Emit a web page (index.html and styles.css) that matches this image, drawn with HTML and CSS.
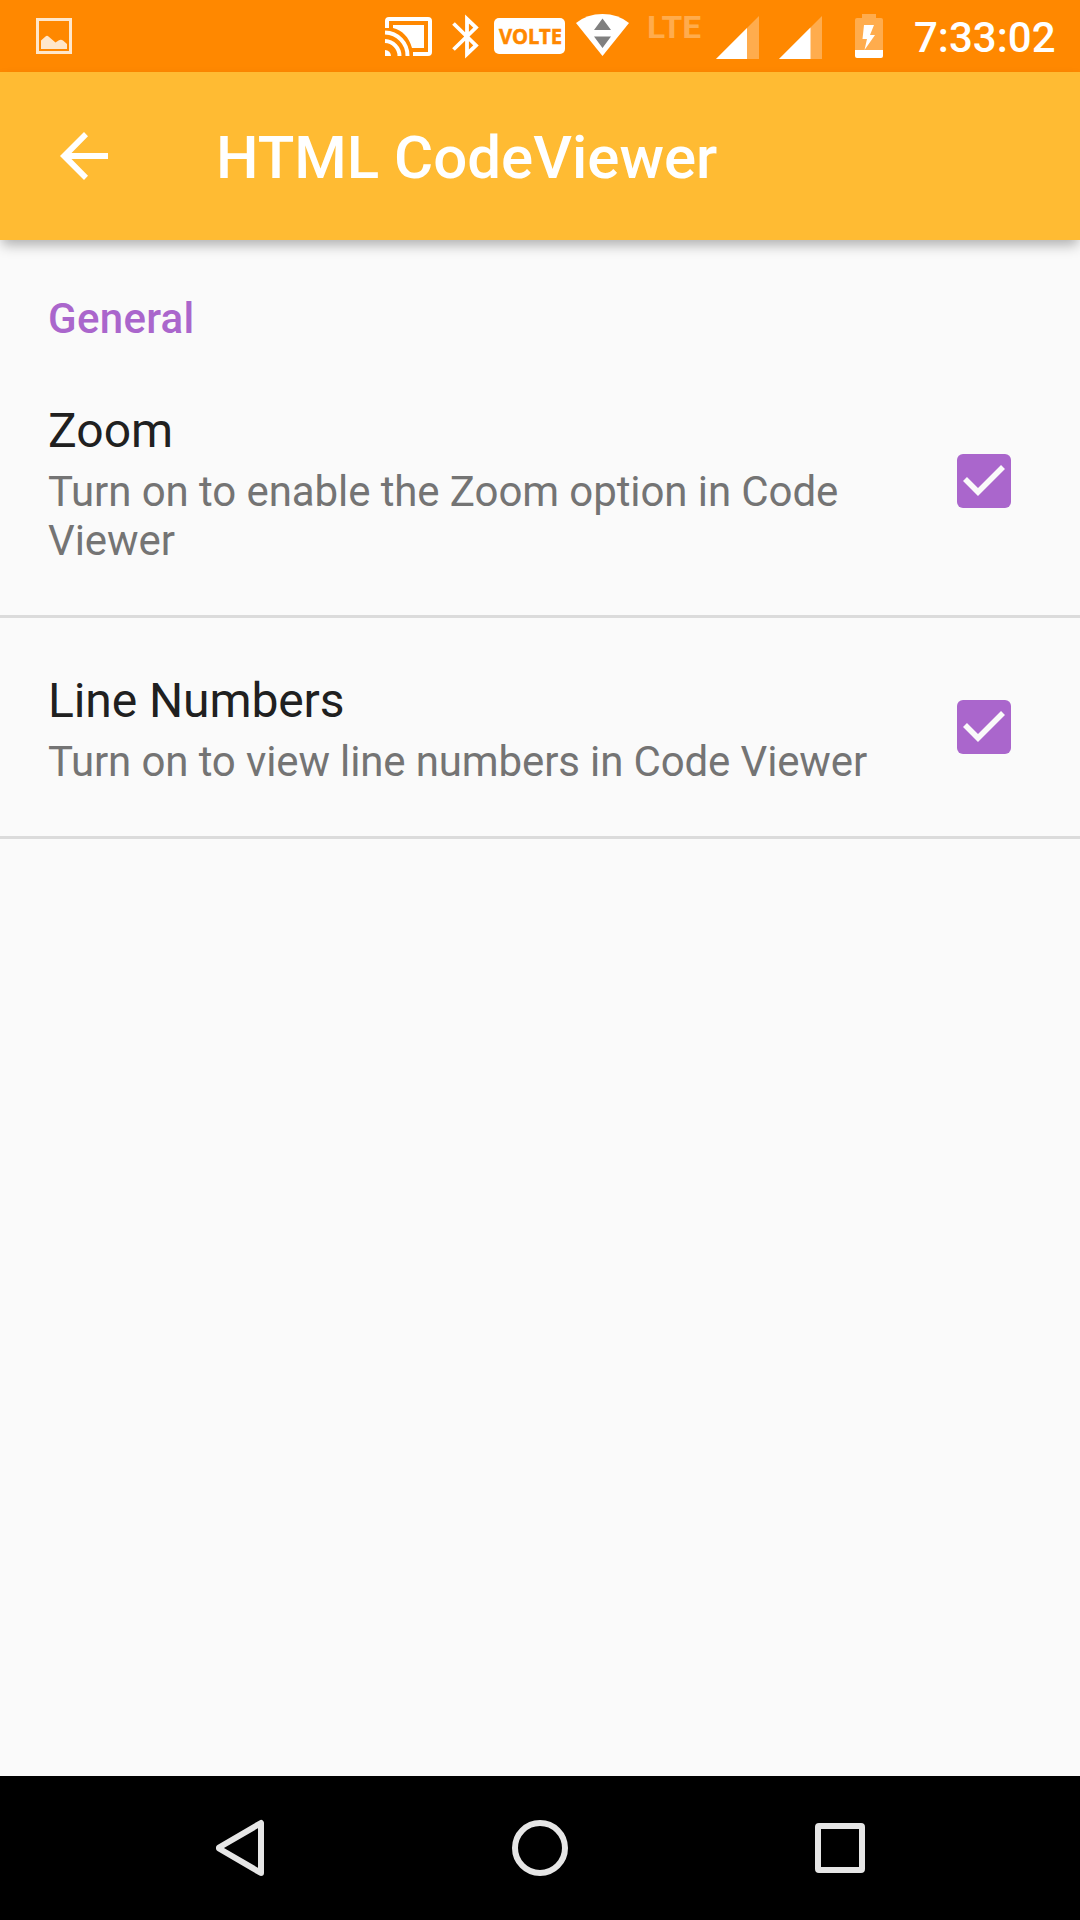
FILE: index.html
```html
<!DOCTYPE html>
<html lang="en">
<head>
<meta charset="utf-8">
<title>HTML CodeViewer</title>
<link rel="stylesheet" href="styles.css">
</head>
<body>
<div class="screen">
  <div class="status-bar">
    <svg class="icon-image" width="36" height="36" viewBox="0 0 36 36">
      <rect x="1.5" y="1.5" width="33" height="33" fill="none" stroke="#ffe7cb" stroke-width="3"/>
      <path d="M5 31V22.5L9.5 18.5Q11 17 12.5 18.5L19.5 24.5L22.5 22.5Q25 21 27 22.5L31 26V31Z" fill="#ffe7cb"/>
    </svg>
    <div class="status-icons">
      <svg class="icon-cast" width="47" height="39" viewBox="0 0 47 39" fill="none" stroke="#fff">
        <path d="M2 11V4Q2 2 4 2H43Q45 2 45 4V35Q45 37 43 37H28" stroke-width="4"/>
        <path d="M8 8H39V31H27C24 20 17 13 8 11Z" fill="#fff" stroke="none"/>
        <path d="M0 15.5A23 23 0 0 1 22.5 39M0 24A15 15 0 0 1 14.5 39" stroke-width="4"/>
        <path d="M0 33A6 6 0 0 1 6 39H0Z" fill="#fff" stroke="none"/>
      </svg>
      <svg class="icon-bluetooth" width="27" height="43" viewBox="0 0 27 43" fill="none" stroke="#fff" stroke-width="3.8">
        <path d="M1.5 8.5L24 30.5L15 39V4L24 12.5L1.5 34.5"/>
      </svg>
      <svg class="icon-volte" width="71" height="36" viewBox="0 0 71 36">
        <rect width="71" height="36" rx="5" fill="#fff"/>
        <text class="volte-text" x="5" y="25.500" textLength="63" lengthAdjust="spacingAndGlyphs">VOLTE</text>
      </svg>
      <svg class="icon-wifi" width="53" height="42" viewBox="0 0 53 42">
        <path d="M0 9Q11 0 26.500 0Q42 0 53 9L26.500 42Z" fill="#fff"/>
        <path d="M26.500 4.500L35 16H18ZM18 22.500H35L26.500 34Z" fill="#808080"/>
      </svg>
      <svg class="icon-lte" width="52" height="24" viewBox="0 0 52 24">
        <text class="lte-text" x="-2" y="23" textLength="54" lengthAdjust="spacingAndGlyphs">LTE</text>
      </svg>
      <svg class="icon-signal" width="43" height="43" viewBox="0 0 43 43">
        <path d="M43 0V43H0Z" fill="#ffac4d"/>
        <path d="M31 12V43H0Z" fill="#fff"/>
      </svg>
      <svg class="icon-signal second" width="43" height="43" viewBox="0 0 43 43">
        <path d="M43 0V43H0Z" fill="#ffac4d"/>
        <path d="M31.500 11.500V43H0Z" fill="#fff"/>
      </svg>
      <svg class="icon-battery" width="28" height="44" viewBox="0 0 28 44">
        <path d="M7 0H21V4H26Q28 4 28 6V36H0V6Q0 4 2 4H7Z" fill="#ffac4d"/>
        <path d="M0 36H28V42Q28 44 26 44H2Q0 44 0 42Z" fill="#fff"/>
        <path d="M9 11H19L15 21H20L9.500 36L12 25H7.500Z" fill="#fff"/>
      </svg>
      <span class="clock">7:33:02</span>
    </div>
  </div>

  <header class="app-bar">
    <svg class="icon-back" width="48" height="48" viewBox="0 0 48 48">
      <path d="M48 21V27H11.500L28 43.700L24 48L0 24L24 0L28 4.300L11.500 21Z" fill="#fff"/>
    </svg>
    <h1 class="app-title">HTML CodeViewer</h1>
  </header>

  <main class="settings">
    <h2 class="category">General</h2>
    <div class="setting setting-zoom">
      <div class="setting-text">
        <div class="setting-title">Zoom</div>
        <div class="setting-summary">Turn on to enable the Zoom option in Code Viewer</div>
      </div>
      <svg class="checkbox" width="54" height="54" viewBox="0 0 54 54">
        <rect width="54" height="54" rx="6" fill="#aa66cc"/>
        <path d="M8 25L21 38L46 13" fill="none" stroke="#fafafa" stroke-width="5.600"/>
      </svg>
    </div>
    <div class="setting setting-lines">
      <div class="setting-text">
        <div class="setting-title">Line Numbers</div>
        <div class="setting-summary">Turn on to view line numbers in Code Viewer</div>
      </div>
      <svg class="checkbox" width="54" height="54" viewBox="0 0 54 54">
        <rect width="54" height="54" rx="6" fill="#aa66cc"/>
        <path d="M8 25L21 38L46 13" fill="none" stroke="#fafafa" stroke-width="5.600"/>
      </svg>
    </div>
  </main>

  <nav class="nav-bar">
    <svg width="60" height="60" viewBox="0 0 60 60" fill="none" stroke="#e6e6e6" stroke-width="6" stroke-linejoin="round">
      <path d="M51 5V55L9 30.500V29.500Z"/>
    </svg>
    <svg width="60" height="60" viewBox="0 0 60 60" fill="none" stroke="#e6e6e6" stroke-width="6">
      <circle cx="30" cy="30" r="25"/>
    </svg>
    <svg width="60" height="60" viewBox="0 0 60 60" fill="none" stroke="#e6e6e6" stroke-width="6" stroke-linejoin="round">
      <rect x="8" y="8" width="44" height="44" rx="1"/>
    </svg>
  </nav>
</div>
</body>
</html>
```
FILE: styles.css
```css
* {
  box-sizing: border-box;
}

body {
  margin: 0;
  font-family: Roboto, sans-serif;
  background: #fafafa;
}

.screen {
  display: flex;
  flex-direction: column;
  width: 1080px;
  height: 1920px;
  overflow: hidden;
}

svg {
  display: block;
  flex: none;
  overflow: visible;
}

.status-bar {
  display: flex;
  justify-content: space-between;
  height: 72px;
  padding: 0 25px 0 36px;
  background: #ff8800;
}

.icon-image {
  margin-top: 18px;
}

.status-icons {
  display: flex;
  align-items: flex-start;
  width: 670px;
}

.icon-cast {
  margin-top: 17px;
}

.icon-bluetooth {
  margin: 15px 0 0 20px;
}

.icon-volte {
  margin: 18px 0 0 15px;
}

.volte-text {
  font: 700 21px "Noto Sans", sans-serif;
  fill: #ff8800;
  stroke: #ff8800;
  stroke-width: 0.5px;
}

.icon-wifi {
  margin: 14px 0 0 11px;
}

.icon-lte {
  margin: 15px 0 0 20px;
}

.lte-text {
  font: 700 32px Roboto, sans-serif;
  fill: #ffac4d;
}

.icon-signal {
  margin: 16px 0 0 15px;
}

.icon-signal.second {
  margin-left: 20px;
}

.icon-battery {
  margin: 14px 0 0 33px;
}

.clock {
  margin: 13px 0 0 31px;
  font-size: 42px;
  font-weight: 500;
  line-height: 49px;
  color: #fff;
  white-space: nowrap;
}

.app-bar {
  display: flex;
  align-items: center;
  gap: 108px;
  height: 168px;
  padding-left: 60px;
  background: #ffbb33;
  box-shadow: 0 7px 12px -2px rgba(0, 0, 0, 0.3);
}

.app-title {
  margin: 4px 0 0;
  font-size: 60px;
  font-weight: 500;
  line-height: 70px;
  color: #fff;
}

.settings {
  flex: 1;
}

.category {
  margin: 0;
  padding: 54px 48px 5px;
  font-size: 42px;
  font-weight: 500;
  line-height: 49px;
  letter-spacing: 0.3px;
  color: #aa66cc;
}

.setting {
  display: flex;
  align-items: center;
  justify-content: space-between;
  padding: 0 69px 0 48px;
  border-bottom: 3px solid #dbdbdb;
}

.setting-text {
  width: 840px;
  padding: 55px 0 50px;
}

.setting-title {
  margin-bottom: 8px;
  font-size: 48px;
  line-height: 56px;
  color: #202020;
}

.setting-summary {
  font-size: 42px;
  line-height: 49px;
  color: #747474;
}

.setting-zoom .setting-summary {
  letter-spacing: -0.085px;
}

.setting-zoom .checkbox {
  margin-bottom: 2px;
}

.setting-lines .setting-title {
  letter-spacing: -0.1px;
}

.setting-lines .setting-summary {
  letter-spacing: -0.13px;
}

.nav-bar {
  display: flex;
  justify-content: center;
  align-items: center;
  gap: 240px;
  height: 144px;
  background: #000;
}
```
